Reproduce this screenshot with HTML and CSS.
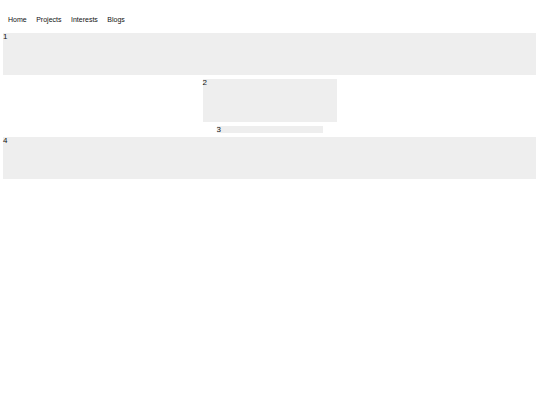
FILE: index.html
```html
<!DOCTYPE html>
<html lang="en">
<head>
    <meta charset="UTF-8">
    <meta name="viewport" content="width=device-width, initial-scale=1.0">
    <title>Home</title>
    <link rel="stylesheet" href="styles.css">
</head>
<body>

    <nav class="nav">
        <a href="#">Home</a>
        <a href="#">Projects</a>
        <a href="#">Interests</a>
        <a href="#">Blogs</a>
    </nav>

    <div class="block block-wide">1</div>
    <div class="block block-mid">2</div>
    <div class="block block-small">3</div>
    <div class="block block-wide">4</div>

</body>
</html>
```
FILE: styles.css
```css
body {
    font-family: 'Liberation Sans', Arial, sans-serif;
    font-size: 7px;
    color: #111;
    background-color: #fff;
    margin: 0;
    padding: 0 4px 0 3px;
}
.nav {
    display: flex;
    gap: 9.5px;
    height: 33px;
    align-items: center;
    padding-left: 5px;
    box-sizing: border-box;
    padding-top: 6px;
}
.nav a {
    color: #111;
    text-decoration: none;
}
.block {
    background-color: #eeeeee;
    font-size: 8px;
    line-height: 8px;
}
.block-wide {
    height: 42px;
    margin-bottom: 4px;
}
.block-mid {
    width: 134px;
    height: 43px;
    margin: 0 auto 4px;
}
.block-small {
    width: 106px;
    height: 7px;
    margin: 0 auto 4px;
    line-height: 7px;
}
```
